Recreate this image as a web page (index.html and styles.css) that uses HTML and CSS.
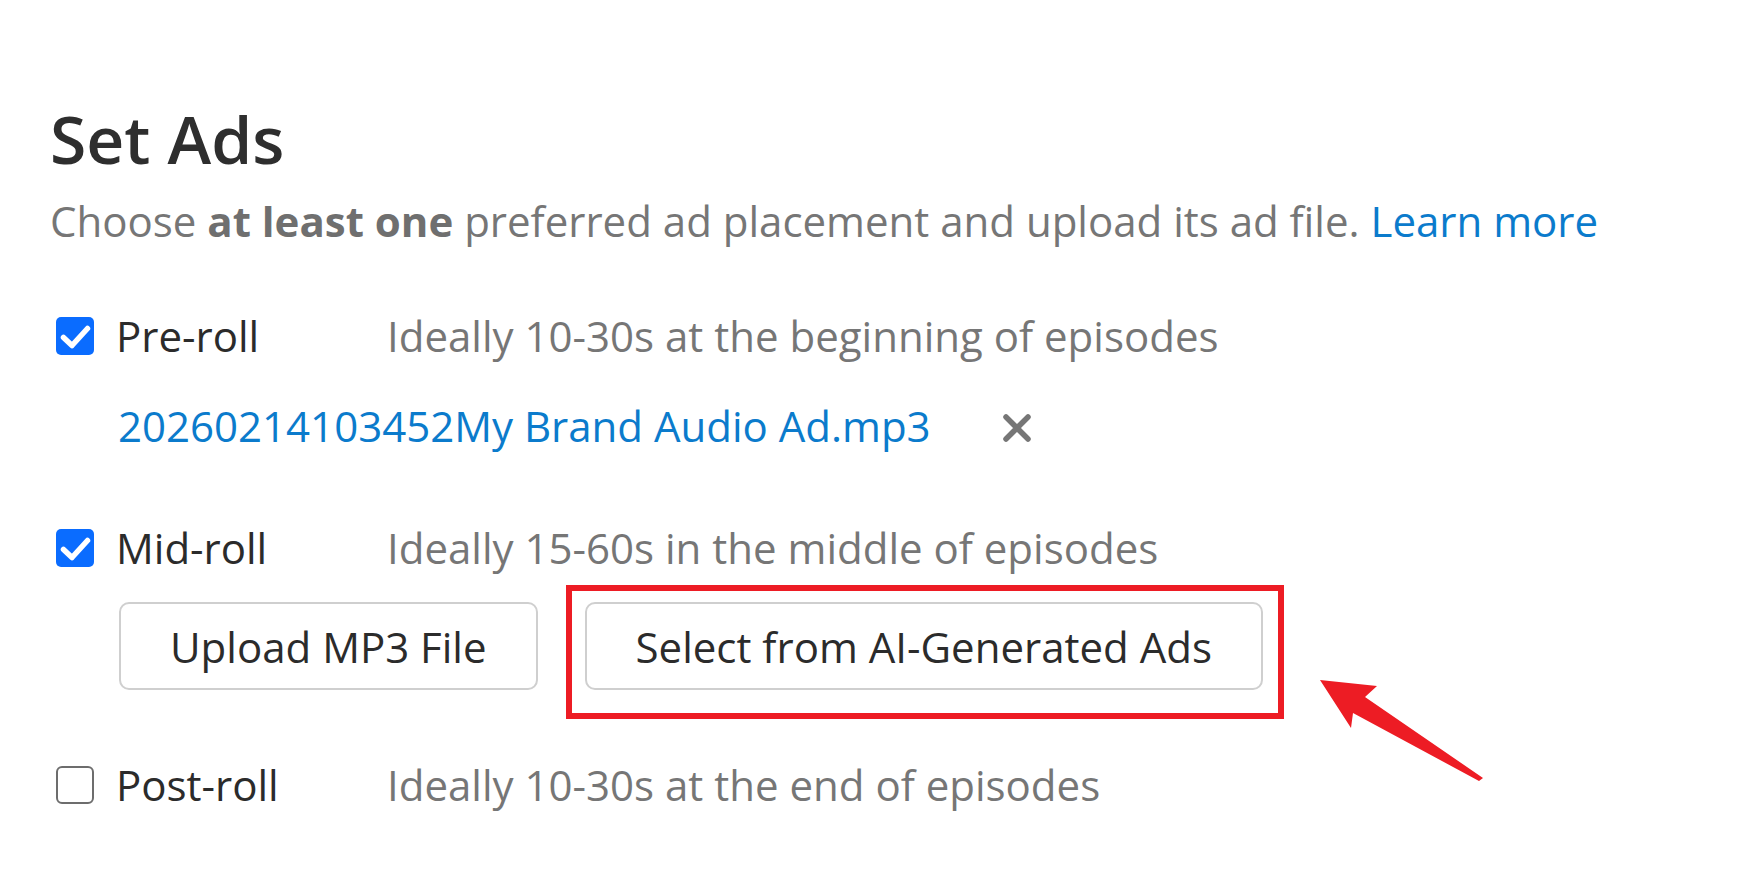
FILE: index.html
```html
<!DOCTYPE html>
<html lang="en">
<head>
<meta charset="utf-8">
<title>Set Ads</title>
<link rel="stylesheet" href="styles.css">
</head>
<body>
<div class="page">
  <h1 class="title">Set Ads</h1>
  <p class="subtitle">Choose <strong>at least one</strong> preferred ad placement and upload its ad file. <a class="link" href="#">Learn more</a></p>

  <div class="option">
    <span class="check checked"><svg viewBox="0 0 38 38" width="38" height="38"><polyline points="7.5,20.5 16,28.5 31.5,11.5" fill="none" stroke="#fff" stroke-width="5.5" stroke-linecap="round" stroke-linejoin="round"/></svg></span>
    <span class="label">Pre-roll</span>
    <span class="desc">Ideally 10-30s at the beginning of episodes</span>
  </div>

  <div class="file-row">
    <a class="file-link" href="#">20260214103452My Brand Audio Ad.mp3</a>
    <span class="remove"><svg viewBox="0 0 32 32" width="32" height="32"><path d="M5 5 L27 27 M27 5 L5 27" stroke="#767676" stroke-width="5.5" stroke-linecap="round" fill="none"/></svg></span>
  </div>

  <div class="option option-mid">
    <span class="check checked"><svg viewBox="0 0 38 38" width="38" height="38"><polyline points="7.5,20.5 16,28.5 31.5,11.5" fill="none" stroke="#fff" stroke-width="5.5" stroke-linecap="round" stroke-linejoin="round"/></svg></span>
    <span class="label">Mid-roll</span>
    <span class="desc">Ideally 15-60s in the middle of episodes</span>
  </div>

  <div class="buttons">
    <button class="btn">Upload MP3 File</button>
    <div class="highlight-wrap">
      <button class="btn">Select from AI-Generated Ads</button>
      <span class="highlight"></span>
    </div>
  </div>

  <div class="option option-post">
    <span class="check"></span>
    <span class="label">Post-roll</span>
    <span class="desc">Ideally 10-30s at the end of episodes</span>
  </div>

  <svg class="arrow" viewBox="0 0 180 120" width="180" height="120"><polygon points="10,10 67,16 55,27 173,108 169,111 43,43 41,58" fill="#ed1c24"/></svg>
</div>
</body>
</html>
```
FILE: styles.css
```css
html, body {
  margin: 0;
  padding: 0;
  background: #ffffff;
}

.page {
  position: relative;
  min-height: 874px;
  box-sizing: border-box;
  padding: 99px 0 0 50px;
  font-family: "Open Sans", "Noto Sans", "Liberation Sans", sans-serif;
  color: #2e2e2e;
}

.title {
  margin: 0;
  font-size: 66px;
  line-height: 79px;
  font-weight: 600;
  color: #2e2e2e;
}

.subtitle {
  margin: 14px 0 0 0;
  font-size: 42px;
  line-height: 57px;
  color: #767676;
}

.subtitle strong {
  font-weight: 700;
  color: #6f6f6f;
}

.link {
  color: #0b7bcc;
  text-decoration: none;
}

.option {
  display: flex;
  align-items: center;
  height: 56px;
  margin: 59px 0 0 6px;
}

.option-mid {
  margin-top: 66px;
}

.option-post {
  margin-top: 67px;
}

.check {
  flex: none;
  width: 38px;
  height: 38px;
  box-sizing: border-box;
  border: 2.5px solid #6d6d6d;
  border-radius: 6px;
  margin-right: 22px;
  display: flex;
  align-items: center;
  justify-content: center;
  overflow: hidden;
}

.check.checked {
  border: none;
  background: #0a6cff;
  border-radius: 5px;
}

.label {
  width: 271px;
  flex: none;
  font-size: 42px;
  line-height: 56px;
  color: #2b2b2b;
}

.desc {
  font-size: 42px;
  line-height: 56px;
  color: #767676;
}

.file-row {
  display: flex;
  align-items: center;
  height: 56px;
  margin: 34px 0 0 68px;
}

.file-link {
  font-size: 42px;
  line-height: 56px;
  color: #0b7bcc;
  text-decoration: none;
}

.remove {
  display: flex;
  margin-left: 70px;
  margin-top: 4px;
}

.buttons {
  display: flex;
  gap: 47px;
  margin: 26px 0 0 69px;
}

.btn {
  height: 88px;
  box-sizing: border-box;
  padding: 0 49px;
  border: 2px solid #cfcfcf;
  border-radius: 10px;
  background: #ffffff;
  font-family: "Open Sans", "Noto Sans", "Liberation Sans", sans-serif;
  font-size: 42px;
  color: #2b2b2b;
  cursor: pointer;
}

.highlight-wrap {
  position: relative;
  display: flex;
}

.highlight {
  position: absolute;
  left: -19px;
  top: -17px;
  right: -21px;
  bottom: -29px;
  border: 6px solid #ed1c24;
  pointer-events: none;
}

.arrow {
  position: absolute;
  left: 1310px;
  top: 670px;
}
```
